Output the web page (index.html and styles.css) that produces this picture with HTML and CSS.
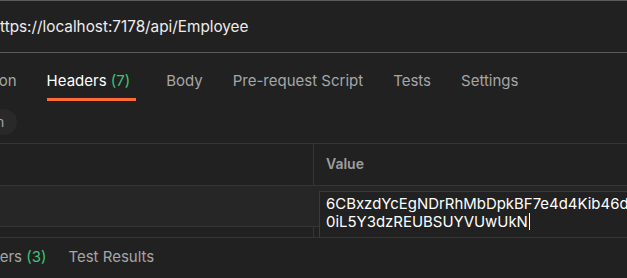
FILE: index.html
```html
<!DOCTYPE html>
<html lang="en">
<head>
<meta charset="UTF-8">
<meta name="viewport" content="width=device-width, initial-scale=1.0">
<title>Employee request</title>
<link rel="stylesheet" href="styles.css">
</head>
<body>
<div class="request">
  <div class="url-bar">
    <span class="url">https://localhost:7178/api/Employee</span>
  </div>

  <div class="tabs">
    <span class="tab">Authorization</span>
    <span class="tab active">Headers <span class="count">(7)</span></span>
    <span class="tab">Body</span>
    <span class="tab">Pre-request Script</span>
    <span class="tab">Tests</span>
    <span class="tab">Settings</span>
  </div>

  <div class="pills">
    <span class="pill">Hidden</span>
  </div>

  <div class="table">
    <div class="row head">
      <div class="cell key"></div>
      <div class="cell value">Value</div>
    </div>
    <div class="row filled">
      <div class="cell key"></div>
      <div class="cell value">
        <div class="editor">6CBxzdYcEgNDrRhMbDpkBF7e4d4Kib46dQ<br>0iL5Y3dzREUBSUYVUwUkN<span class="caret"></span></div>
      </div>
    </div>
    <div class="row empty">
      <div class="cell key"></div>
      <div class="cell value"></div>
    </div>
  </div>

  <div class="tabs response">
    <span class="tab">Headers <span class="count">(3)</span></span>
    <span class="tab">Test Results</span>
  </div>
</div>
</body>
</html>
```

FILE: styles.css
```css
body {
  margin: 0;
  background: #212121;
  font-family: Inter, "Noto Sans", sans-serif;
  color: #a6a6a6;
  overflow: hidden;
}
.request {
  width: 627px;
  height: 278px;
  overflow: hidden;
  border-top: 1px solid #5c5c5c;
  box-sizing: border-box;
}
.url-bar {
  height: 50px;
  display: flex;
  align-items: center;
  border-bottom: 1px solid #5c5c5c;
  padding-bottom: 1px;
}
.url {
  margin-left: -9px;
  font-size: 15.3px;
  color: #ededed;
}
.tabs {
  display: flex;
  gap: 30px;
  height: 55px;
  align-items: center;
  margin-left: -78px;
  font-size: 15px;
  white-space: nowrap;
}
.tab {
  position: relative;
}
.tab.active {
  color: #fff;
  padding-right: 6px;
}
.tab.active::after {
  content: "";
  position: absolute;
  left: 0;
  right: 0;
  bottom: -11px;
  height: 3px;
  background: #ff6c37;
}
.count {
  color: #3dc577;
}
.pills {
  height: 34px;
  margin-left: -56px;
  padding-top: 1px;
}
.pill {
  display: inline-block;
  height: 26px;
  line-height: 26px;
  padding: 0 13px;
  border-radius: 13px;
  background: #292929;
  font-size: 14px;
  color: #a6a6a6;
}
.table {
  border-top: 1px solid #353535;
  border-bottom: 1px solid #353535;
  height: 93px;
  overflow: hidden;
}
.row {
  display: flex;
  border-bottom: 1px solid #353535;
}
.row.head {
  height: 41px;
}
.row.filled {
  height: 40px;
  background: #262626;
}
.row.empty {
  height: 11px;
}
.cell.key {
  width: 313px;
  border-right: 1px solid #353535;
}
.cell.value {
  flex: 1;
  position: relative;
  padding-left: 12px;
  display: flex;
  align-items: center;
}
.row.head .cell.value {
  font-size: 14px;
  font-weight: 600;
  color: #9e9e9e;
  padding-bottom: 3px;
}
.row.filled .cell.key {
  border-right-color: transparent;
}
.editor {
  position: absolute;
  left: 5px;
  top: 5px;
  width: 400px;
  height: 60px;
  padding: 3px 0 0 6px;
  box-sizing: border-box;
  border: 1px solid #3a3a3a;
  background: #212121;
  color: #fff;
  font-size: 14.95px;
  line-height: 18px;
  white-space: nowrap;
  z-index: 1;
}
.caret {
  display: inline-block;
  width: 1px;
  height: 17px;
  background: #fff;
  vertical-align: -3px;
  margin-left: 1px;
}
.tabs.response {
  height: 42px;
  margin-left: -38px;
  gap: 22px;
  padding-bottom: 6px;
  box-sizing: border-box;
}
```
